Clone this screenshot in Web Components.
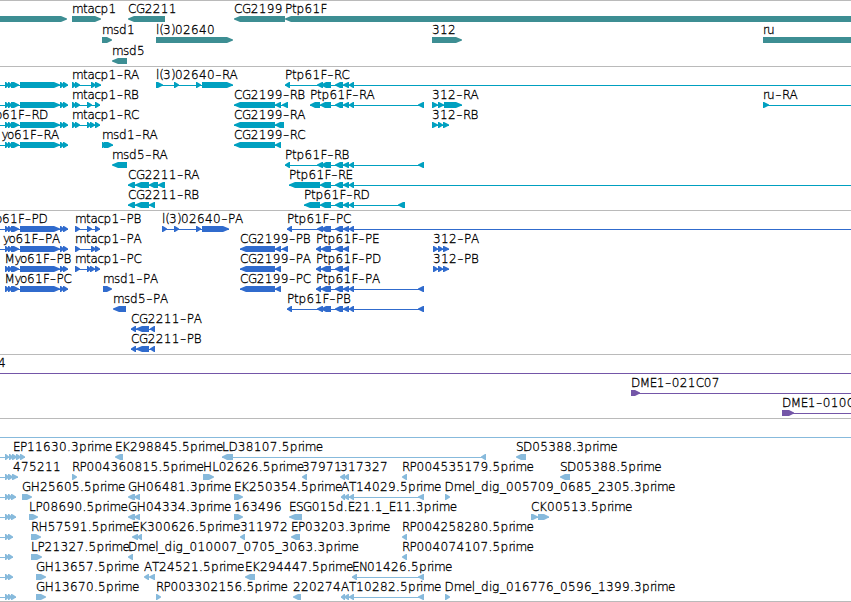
<!DOCTYPE html>
<html lang="en">
<head>
<meta charset="utf-8">
<title>Genome annotation tracks</title>
<style>
html, body { margin: 0; background: #fff; overflow: hidden; }
</style>
</head>
<body>
<genome-view></genome-view>
<script>
// Horizontal advances of the label typeface on the pixel grid.
const ADV = {m:11,t:4.5,a:7,c:6,p:8,'-':7,R:7.5,A:8,P:7,F:6.5,C:8,G:8.7,D:9.3,M:9.4,E:7,B:7,S:7,H:9.3,K:8,L:6.5,T:7,
  r:4,i:3,e:7,l:3.3,_:6,d:8,g:8,s:6,y:5.6,o:7,u:8,'(':3.6,')':4,'.':4};

// One annotated feature: a label, an intron line and its arrow-shaped exons.
class GeneFeature extends HTMLElement {
  connectedCallback() {
    const root = this.attachShadow({ mode: 'open' });
    const name = this.getAttribute('name') || '';
    const left = this.getAttribute('strand') === '-';
    let x = +this.getAttribute('start');
    const xs = [...name].map(ch => { const at = x; x += ADV[ch] || 8; return ch === 'M' ? at - (at < 0 ? 4 : 0.5) : at; });
    const ys = [...name].map(ch => ch === '-' ? 12.8 : 11);
    const label = name.replace(/-/g, '<tspan>-</tspan>');
    const exons = (this.getAttribute('exons') || '').split(' ').filter(Boolean).map(e => e.split(':').map(Number));
    const span = (this.getAttribute('span') || '').split(':').map(Number);
    const shapes = exons.map(([a, b]) => {
      const w = b - a, tip = w > 12 ? 6 : Math.min(w - 1, 5);
      return left
        ? `<polygon points="${b},14 ${a + tip},14 ${a},16.5 ${a},17.5 ${a + tip},20 ${b},20"/>`
        : `<polygon points="${a},14 ${b - tip},14 ${b},16.5 ${b},17.5 ${b - tip},20 ${a},20"/>`;
    }).join('');
    root.innerHTML = `<style>
      :host { display: block; grid-area: 1 / 1; min-width: 0; }
      svg { display: block; width: 100%; height: 100%; overflow: visible; }
      polygon, rect { fill: var(--track-color); }
      text { font: 200 12px "DejaVu Sans", sans-serif; fill: #000; stroke: #000; stroke-width: 0.3px; }
      tspan { font-size: 19px; stroke: none; }
    </style><svg>${span.length === 2 ? `<rect x="${span[0]}" y="17" width="${span[1] - span[0]}" height="1" shape-rendering="crispEdges"/>` : ''}${shapes}${
      name ? `<text x="${xs.join(' ')}" y="${ys.join(' ')}">${label}</text>` : ''}</svg>`;
  }
}
customElements.define('gene-feature', GeneFeature);

// One line of features that share a vertical position.
class TrackRow extends HTMLElement {
  connectedCallback() {
    this.attachShadow({ mode: 'open' }).innerHTML = `<style>
      :host { display: grid; grid-template: var(--row-height, 20px) / 100%; }
    </style><slot></slot>`;
  }
}
customElements.define('track-row', TrackRow);

// A group of rows under a separator line.
class AnnotationTrack extends HTMLElement {
  connectedCallback() {
    this.attachShadow({ mode: 'open' }).innerHTML = `<style>
      :host { display: flex; flex-direction: column; border-top: 1px solid #bababa; padding: 1px 0 var(--track-pad, 2px); }
    </style><slot></slot>`;
  }
}
customElements.define('annotation-track', AnnotationTrack);

// Feature record: [name, start, strand, exons, span]
const myo = '5:9 8:12 11:19 20:60 60:64 63:68';
const tail = '335:343 343:349 349:354';
const tA = ['', 0, '+', '5:9 8:12 11:16', '0:16'];
const tB = ['', 0, '+', '5:9 8:13', '0:13'];
const tracks = [
 { color: '#3d8e93', row: 21, pad: 1, rows: [
  [['',0,'+','-20:67'],['mtacp1',72,'+','72:101'],['CG2211',128,'-','128:165'],['CG2199',234,'-','234:285'],['Ptp61F',285,'-','285:870']],
  [['msd1',102,'+','102:112'],['l(3)02640',156,'+','156:233'],['312',432,'+','432:462'],['ru',763,'+','763:870']],
  [['msd5',112,'-','112:127']] ]},
 { color: '#00a0c0', row: 20, pad: 2, rows: [
  [['',0,'+',myo,'0:68'],['mtacp1-RA',72,'+','72:76 75:80 91:96 95:101','72:101'],['l(3)02640-RA',156,'+','156:163 174:179 196:201 202:233','156:233'],['Ptp61F-RC',285,'-','285:290 317:323 321:331 '+tail,'285:851']],
  [['',0,'+',myo,'0:68'],['mtacp1-RB',72,'+','72:76 75:80 87:92 95:100','72:100'],['CG2199-RB',234,'-','234:275 275:281 282:288','234:288'],['Ptp61F-RA',310,'-','310:320 320:331 '+tail+' 418:424','310:424'],['312-RA',432,'+','432:438 438:444 444:462','432:462'],['ru-RA',763,'+','763:769','763:851']],
  [['Myo61F-RD',-20,'+',myo,'0:68'],['mtacp1-RC',72,'+','72:76 75:80 87:91 90:95 95:100','72:100'],['CG2199-RA',234,'-','234:275 275:284','234:284'],['312-RB',432,'+','432:438 438:443 443:449','432:449']],
  [['Myo61F-RA',-8,'+',myo,'0:68'],['msd1-RA',102,'+','102:106 104:113','102:113'],['CG2199-RC',234,'-','234:275 275:281','234:281']],
  [['msd5-RA',112,'-','112:127'],['Ptp61F-RB',285,'-','285:290 317:323 321:331 '+tail+' 418:424','285:424']],
  [['CG2211-RA',128,'-','128:135 135:149 149:158 158:165','128:165'],['Ptp61F-RE',289,'-','289:320 320:331 '+tail,'289:851']],
  [['CG2211-RB',128,'-','128:135 135:149 149:155','128:155'],['Ptp61F-RD',304,'-','304:320 320:331 '+tail+' 398:405','304:405']] ]},
 { color: '#306bcd', row: 20, pad: 2, rows: [
  [['Myo61F-PD',-20,'+',myo,'0:68'],['mtacp1-PB',75,'+','75:80 87:92 95:100','75:100'],['l(3)02640-PA',162,'+','162:167 174:179 196:201 202:229','162:229'],['Ptp61F-PC',287,'-','287:292 317:323 321:331 '+tail,'287:851']],
  [['Myo61F-PA',-6.5,'+',myo,'0:68'],['mtacp1-PA',75,'+','75:80 91:96 95:100','75:100'],['CG2199-PB',240,'-','240:275 275:281 282:288','240:288'],['Ptp61F-PE',316,'-','316:321 321:331 335:343 343:349','316:349'],['312-PA',433,'+','433:438 438:443 443:449','433:449']],
  [['Myo61F-PB',5,'+',myo,'5:68'],['mtacp1-PC',75,'+','75:80 87:91 90:95 95:100','75:100'],['CG2199-PA',240,'-','240:275 275:281','240:281'],['Ptp61F-PD',316,'-','316:321 321:331 335:343 343:349','316:349'],['312-PB',433,'+','433:438 438:443 443:449','433:449']],
  [['Myo61F-PC',5,'+',myo,'5:68'],['msd1-PA',103,'+','103:112'],['CG2199-PC',240,'-','240:275 275:281','240:281'],['Ptp61F-PA',316,'-','316:321 321:331 '+tail+' 418:424','316:424']],
  [['msd5-PA',113,'-','113:126'],['Ptp61F-PB',287,'-','287:292 317:323 321:331 '+tail+' 418:424','287:424']],
  [['CG2211-PA',131,'-','131:136 136:149 150:155','131:155']],
  [['CG2211-PB',131,'-','131:136 136:149 150:155','131:155']] ]},
 { color: '#7456a8', row: 20, pad: 2, rows: [
  [['4',-2,'+','','0:851']],
  [['DME1-021C07',631,'+','631:640','631:851']],
  [['DME1-010C07',782,'+','782:794','782:851']] ]},
 { color: '#87badc', row: 20, pad: 1, rows: [
  [['',0,'+','','0:851']],
  [['EP11630.3prime',13,'+','5:9 9:13 12:17 16:21 20:25','0:25'],['EK298845.5prime',115,'-','115:123'],['LD38107.5prime',222,'-','222:233 481:486','222:486'],['SD05388.3prime',516,'-','516:526']],
  [['475211',13,'+','5:9 8:13 12:18','0:18'],['RP004360815.5prime',72,'+','72:77'],['HL02626.5prime',203,'+','203:214'],['37971',302,'-','302:307'],['317327',340,'-','340:345 344:349'],['RP004535179.5prime',402,'-','402:407'],['SD05388.5prime',560,'-','560:570']],
  [tA,['GH25605.5prime',22,'+','22:32'],['GH06481.3prime',128,'-','128:135 134:140'],['EK250354.5prime',234,'+','234:243'],['AT14029.5prime',341,'-','341:345 344:349 349:354 418:424','341:424'],['Dmel_dig_005709_0685_2305.3prime',444.5,'+','445:450']],
  [tA,['LP08690.5prime',29,'+','29:38'],['GH04334.3prime',128,'-','128:135 134:140'],['163496',234,'+','234:243'],['ESG015d.E21.1_E11.3prime',289,'-','289:302'],['CK00513.5prime',531,'+','531:538 538:549','531:549']],
  [tB,['RH57591.5prime',31,'+','31:41'],['EK300626.5prime',132,'-','132:138 137:142'],['311972',240,'-','240:245'],['EP03203.3prime',291,'-','291:300'],['RP004258280.5prime',402,'-','402:407']],
  [tB,['LP21327.5prime',31,'+','31:42'],['Dmel_dig_010007_0705_3063.3prime',128,'-','128:133'],['RP004074107.5prime',402,'-','402:407']],
  [tB,['GH13657.5prime',36,'+','36:46'],['AT24521.5prime',144,'-','144:149 149:155'],['EK294447.5prime',245,'-','245:255'],['EN01426.5prime',352,'-','352:357 418:424','352:424']],
  [tA,['GH13670.5prime',36,'+','36:46'],['RP003302156.5prime',156,'+','156:161'],['220274',293,'-','293:301'],['AT10282.5prime',341,'-','341:345 344:349 349:354 418:424','341:424'],['Dmel_dig_016776_0596_1399.3prime',444.5,'+','445:450']] ]}
];

// The whole view: all tracks stacked and closed by a bottom rule.
class GenomeView extends HTMLElement {
  connectedCallback() {
    this.attachShadow({ mode: 'open' }).innerHTML = `<style>
      :host { display: flex; flex-direction: column; width: 851px; box-sizing: border-box; height: 602px; overflow: hidden; background: #fff; border-bottom: 1px solid #bababa; }
    </style>` + tracks.map(t => `<annotation-track style="--track-color:${t.color};--row-height:${t.row}px;--track-pad:${t.pad}px">${
      t.rows.map(r => `<track-row>${r.map(([n, s, d, e, sp]) =>
        `<gene-feature name="${n}" start="${s}" strand="${d}" exons="${e}"${sp ? ` span="${sp}"` : ''}></gene-feature>`).join('')}</track-row>`).join('')
    }</annotation-track>`).join('');
  }
}
customElements.define('genome-view', GenomeView);
</script>
</body>
</html>
